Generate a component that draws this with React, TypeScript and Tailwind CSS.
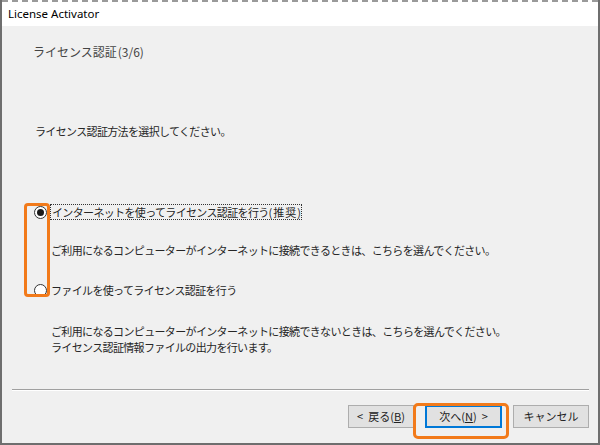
import React from "react";

const jp = "font-['Noto_Sans_CJK_JP','Noto_Sans',sans-serif]";

function Radio({ checked }: { checked: boolean }) {
  return (
    <span className="flex h-[13px] w-[13px] shrink-0 items-center justify-center rounded-full border border-[#333] bg-white">
      {checked && <span className="h-[7px] w-[7px] rounded-full bg-[#1a1a1a]" />}
    </span>
  );
}

function Btn({ children, primary }: { children: React.ReactNode; primary?: boolean }) {
  return (
    <div
      className={`flex h-[23px] items-center justify-center bg-[#e1e1e1] text-[11px] tracking-normal text-[#222] ${
        primary ? "w-[77px] border-2 border-[#0078d7]" : "w-[66px] border border-[#adadad]"
      }`}
    >
      {children}
    </div>
  );
}

export default function App() {
  return (
    <div className={`relative flex h-[445px] w-[600px] flex-col border-x-2 border-b-2 border-[#6e6e6e] bg-white ${jp}`}>
      <div className="h-[2px] w-full border-t-2 border-dashed border-[#9a9a9a]" />
      <div className="flex h-[24px] items-center pl-[6px] font-['Noto_Sans',sans-serif] text-[11.5px] text-black">
        License Activator
      </div>
      <div className="relative flex flex-1 flex-col bg-[#f0f0f0] text-[11px] tracking-[-0.65px] text-[#262626]">
        <div className="ml-[31px] mt-[18px] h-[16px] text-[12px] leading-[16px] tracking-normal text-[#444]">
          ライセンス認証<span className="ml-[1px]">(3/6)</span>
        </div>
        <div className="ml-[33px] mt-[63px] h-[16px] leading-[16px]">ライセンス認証方法を選択してください。</div>

        <div className="ml-[32px] mt-[65px] flex h-[16px] items-center">
          <Radio checked />
          <span className="ml-[3px] border border-dotted border-[#333] px-[1px] leading-[14px]">
            インターネットを使ってライセンス認証を行う<span className="tracking-[1px]">(推奨</span>)
          </span>
        </div>
        <div className="ml-[49px] mt-[22px] h-[16px] leading-[16px]">
          ご利用になるコンピューターがインターネットに接続できるときは、こちらを選んでください。
        </div>
        <div className="ml-[32px] mt-[24px] flex h-[16px] items-center">
          <Radio checked={false} />
          <span className="ml-[4px] leading-[16px]">ファイルを使ってライセンス認証を行う</span>
        </div>
        <div className="ml-[49px] mt-[25px] leading-[16px]">
          <div>ご利用になるコンピューターがインターネットに接続できないときは、こちらを選んでください。</div>
          <div>ライセンス認証情報ファイルの出力を行います。</div>
        </div>

        <div className="ml-[10px] mr-[9px] mt-[34px] h-[2px] border-t border-b border-t-[#a0a0a0] border-b-white" />

        <div className="mr-[9px] mt-[14px] flex justify-end gap-[11px]">
          <div className="flex gap-[11px]">
            <Btn>
              <span className="mr-[5px]">&lt;</span>戻る(<u>B</u>)
            </Btn>
            <Btn primary>
              次へ(<u>N</u>)<span className="ml-[5px]">&gt;</span>
            </Btn>
          </div>
          <div className="flex h-[23px] w-[76px] items-center justify-center border border-[#adadad] bg-[#e1e1e1] text-[11px] tracking-normal text-[#222]">
            キャンセル
          </div>
        </div>

        <div className="pointer-events-none absolute left-[22px] top-[177px] h-[94px] w-[26px] rounded-[4px] border-[3px] border-[#f27a1a]" />
        <div className="pointer-events-none absolute left-[411px] top-[377px] h-[36px] w-[96px] rounded-[5px] border-[3px] border-[#f27a1a]" />
      </div>
    </div>
  );
}
